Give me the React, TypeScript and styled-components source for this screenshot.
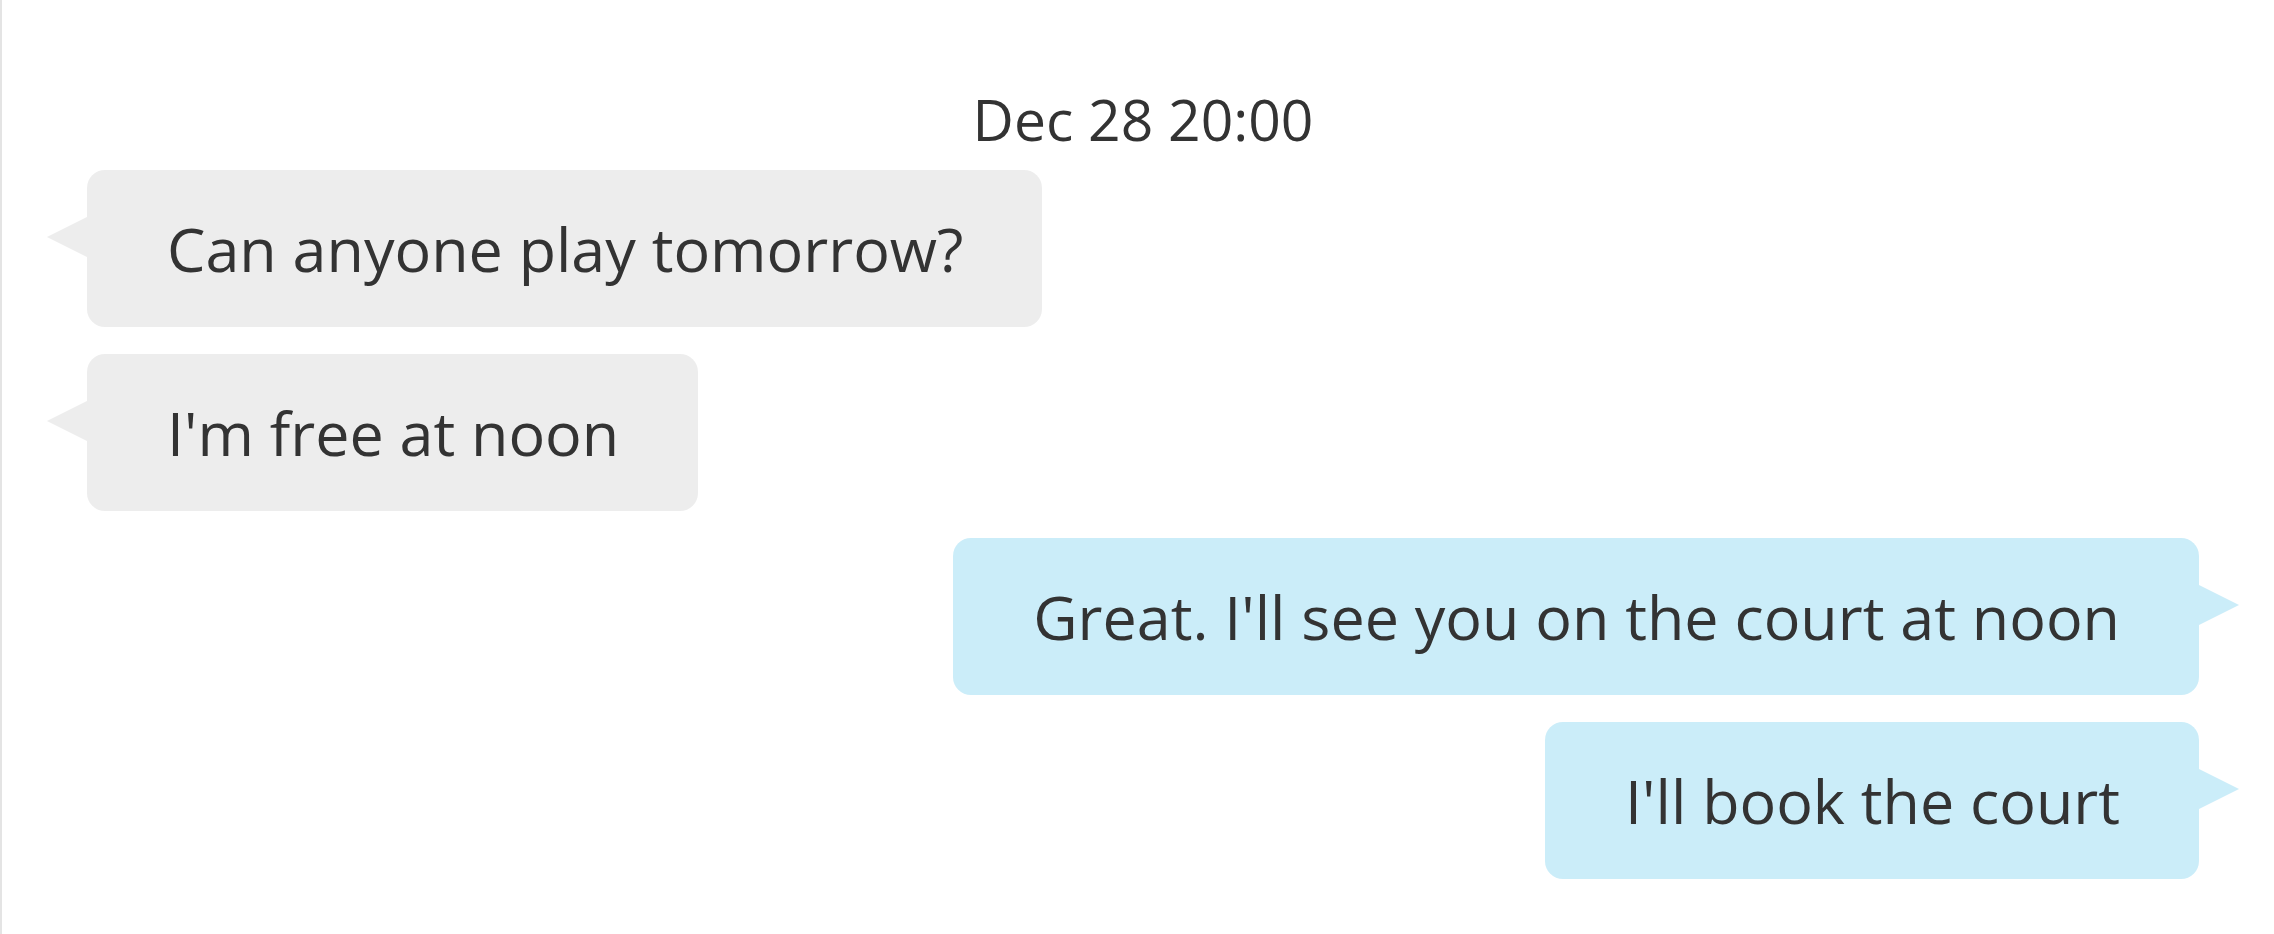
import React from "react";
import styled, { createGlobalStyle } from "styled-components";

const GlobalStyle = createGlobalStyle`
  html, body {
    margin: 0;
    padding: 0;
    background: #ffffff;
  }
  body {
    font-family: "Open Sans", "Noto Sans", sans-serif;
    color: #333333;
  }
`;

const Pane = styled.div`
  box-sizing: border-box;
  width: 2274px;
  height: 934px;
  border-left: 2px solid #e4e4e4;
  padding: 86px 75px 0 85px;
  display: flex;
  flex-direction: column;
  gap: 27px;
  overflow: hidden;
`;

const Stamp = styled.div`
  text-align: center;
  font-size: 57px;
  line-height: 66px;
  color: #333333;
  margin-bottom: -9px;
`;

const Row = styled.div<{ $mine?: boolean }>`
  display: flex;
  justify-content: ${(p) => (p.$mine ? "flex-end" : "flex-start")};
`;

const Bubble = styled.div<{ $mine?: boolean }>`
  position: relative;
  box-sizing: border-box;
  height: 157px;
  display: flex;
  align-items: center;
  padding: 0 79px 0 80px;
  border-radius: 18px;
  font-size: 61px;
  white-space: nowrap;
  color: #333333;
  background: ${(p) => (p.$mine ? "#cbedf9" : "#ededed")};

  &::before {
    content: "";
    position: absolute;
    top: 47px;
    ${(p) => (p.$mine ? "right: -40px;" : "left: -40px;")}
    width: 0;
    height: 0;
    border-top: 20px solid transparent;
    border-bottom: 20px solid transparent;
    ${(p) =>
      p.$mine
        ? "border-left: 40px solid #cbedf9;"
        : "border-right: 40px solid #ededed;"}
  }
`;

const messages = [
  { text: "Can anyone play tomorrow?", mine: false },
  { text: "I'm free at noon", mine: false },
  { text: "Great. I'll see you on the court at noon", mine: true },
  { text: "I'll book the court", mine: true },
];

export default function App() {
  return (
    <>
      <GlobalStyle />
      <Pane>
        <Stamp>Dec 28 20:00</Stamp>
        {messages.map((m, i) => (
          <Row key={i} $mine={m.mine}>
            <Bubble $mine={m.mine}>{m.text}</Bubble>
          </Row>
        ))}
      </Pane>
    </>
  );
}
